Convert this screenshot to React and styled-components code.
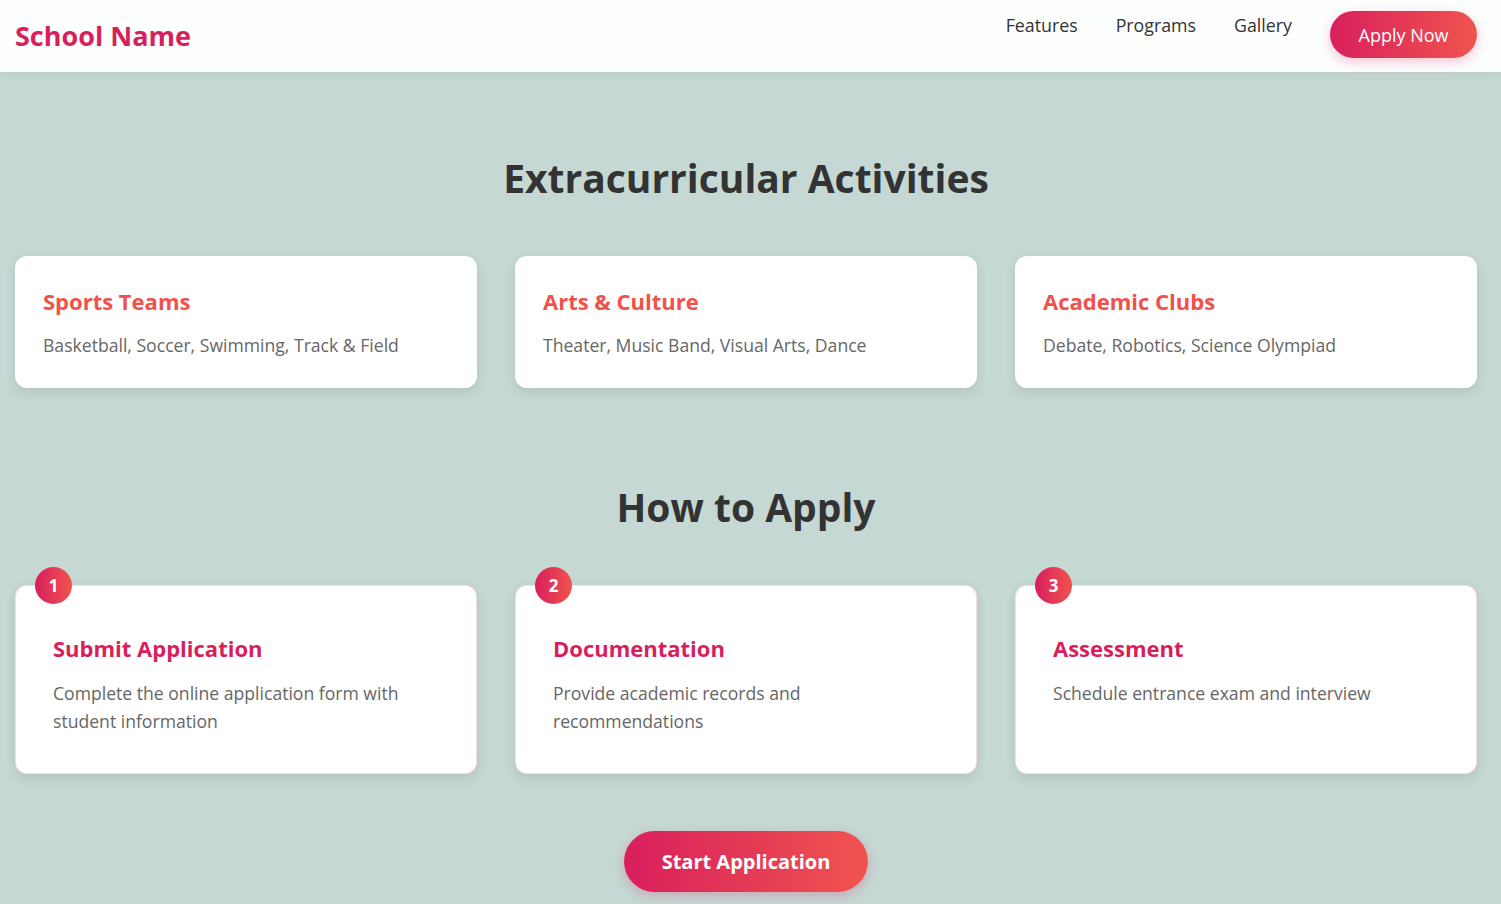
import styled, { createGlobalStyle } from 'styled-components';

const GlobalStyle = createGlobalStyle`
  * { box-sizing: border-box; }
  body {
    margin: 0;
    background: #c5d8d4;
    font-family: "Segoe UI", "Open Sans", "Liberation Sans", sans-serif;
    color: #333;
  }
`;

const ACTIVITIES = [
  { id: 1, title: 'Sports Teams', text: 'Basketball, Soccer, Swimming, Track & Field' },
  { id: 2, title: 'Arts & Culture', text: 'Theater, Music Band, Visual Arts, Dance' },
  { id: 3, title: 'Academic Clubs', text: 'Debate, Robotics, Science Olympiad' },
];

const STEPS = [
  { id: 1, title: 'Submit Application', text: 'Complete the online application form with student information' },
  { id: 2, title: 'Documentation', text: 'Provide academic records and recommendations' },
  { id: 3, title: 'Assessment', text: 'Schedule entrance exam and interview' },
];

const Header = styled.header`
  height: 72px;
  background: rgba(255, 255, 255, 0.97);
  box-shadow: 0 2px 10px rgba(0, 0, 0, 0.06);
  display: flex;
  justify-content: space-between;
  align-items: flex-start;
  padding: 0 24px 0 15px;
`;

const Logo = styled.h1`
  margin: 19px 0 0;
  font-size: 27px;
  line-height: 34px;
  font-weight: 700;
  color: #d81f5c;
`;

const Nav = styled.nav`
  display: flex;
  align-items: flex-start;
  gap: 38px;
`;

const NavLink = styled.a`
  margin-top: 13px;
  font-size: 17.8px;
  line-height: 24px;
  color: #333;
  text-decoration: none;
`;

const GradientButton = styled.button`
  border: none;
  border-radius: 999px;
  color: #fff;
  background: linear-gradient(90deg, #d81f5c, #f0544f);
  box-shadow: 0 4px 12px rgba(216, 31, 92, 0.25);
  font-family: inherit;
  cursor: pointer;
`;

const ApplyButton = styled(GradientButton)`
  margin-top: 11px;
  width: 147px;
  height: 47px;
  font-size: 18px;
`;

const Section = styled.section`
  padding: ${({ $top }) => $top}px 24px ${({ $bottom }) => $bottom}px 15px;
`;

const SectionTitle = styled.h2`
  margin: 0 0 54px;
  text-align: center;
  font-size: 39px;
  line-height: 48px;
  font-weight: 700;
  color: #333;
`;

const Grid = styled.div`
  display: grid;
  grid-template-columns: repeat(3, 1fr);
  gap: 38px;
`;

const ActivityCard = styled.div`
  background: #fff;
  border-radius: 12px;
  padding: 31px 28px 29px;
  box-shadow: 0 4px 12px rgba(0, 0, 0, 0.1);
`;

const ActivityTitle = styled.h3`
  margin: 0 0 15px;
  font-size: 22px;
  line-height: 29px;
  font-weight: 700;
  color: #f0514a;
`;

const CardText = styled.p`
  margin: 0;
  font-size: 17.6px;
  line-height: 28px;
  color: #666;
`;

const StepCard = styled.div`
  position: relative;
  background: #fff;
  border: 1px solid rgba(216, 31, 92, 0.15);
  border-radius: 12px;
  padding: 48px 37px 38px;
  box-shadow: 0 4px 12px rgba(0, 0, 0, 0.1);
`;

const StepBadge = styled.span`
  position: absolute;
  top: -19px;
  left: 19px;
  width: 37px;
  height: 37px;
  border-radius: 50%;
  background: linear-gradient(90deg, #d81f5c, #f0544f);
  color: #fff;
  font-size: 17px;
  font-weight: 700;
  display: flex;
  align-items: center;
  justify-content: center;
`;

const StepTitle = styled.h3`
  margin: 0 0 16px;
  font-size: 22px;
  line-height: 29px;
  font-weight: 700;
  color: #d81f5c;
`;

const Center = styled.div`
  display: flex;
  justify-content: center;
  margin-top: 57px;
`;

const StartButton = styled(GradientButton)`
  width: 244px;
  height: 61px;
  font-size: 20px;
  font-weight: 700;
`;

function App() {
  return (
    <>
      <GlobalStyle />
      <Header>
        <Logo>School Name</Logo>
        <Nav>
          <NavLink href="#features">Features</NavLink>
          <NavLink href="#programs">Programs</NavLink>
          <NavLink href="#gallery">Gallery</NavLink>
          <ApplyButton>Apply Now</ApplyButton>
        </Nav>
      </Header>

      <Section $top={82} $bottom={48}>
        <SectionTitle>Extracurricular Activities</SectionTitle>
        <Grid>
          {ACTIVITIES.map(({ id, title, text }) => (
            <ActivityCard key={id}>
              <ActivityTitle>{title}</ActivityTitle>
              <CardText>{text}</CardText>
            </ActivityCard>
          ))}
        </Grid>
      </Section>

      <Section $top={47} $bottom={40}>
        <SectionTitle>How to Apply</SectionTitle>
        <Grid>
          {STEPS.map(({ id, title, text }) => (
            <StepCard key={id}>
              <StepBadge>{id}</StepBadge>
              <StepTitle>{title}</StepTitle>
              <CardText>{text}</CardText>
            </StepCard>
          ))}
        </Grid>
        <Center>
          <StartButton>Start Application</StartButton>
        </Center>
      </Section>
    </>
  );
}

export default App;
